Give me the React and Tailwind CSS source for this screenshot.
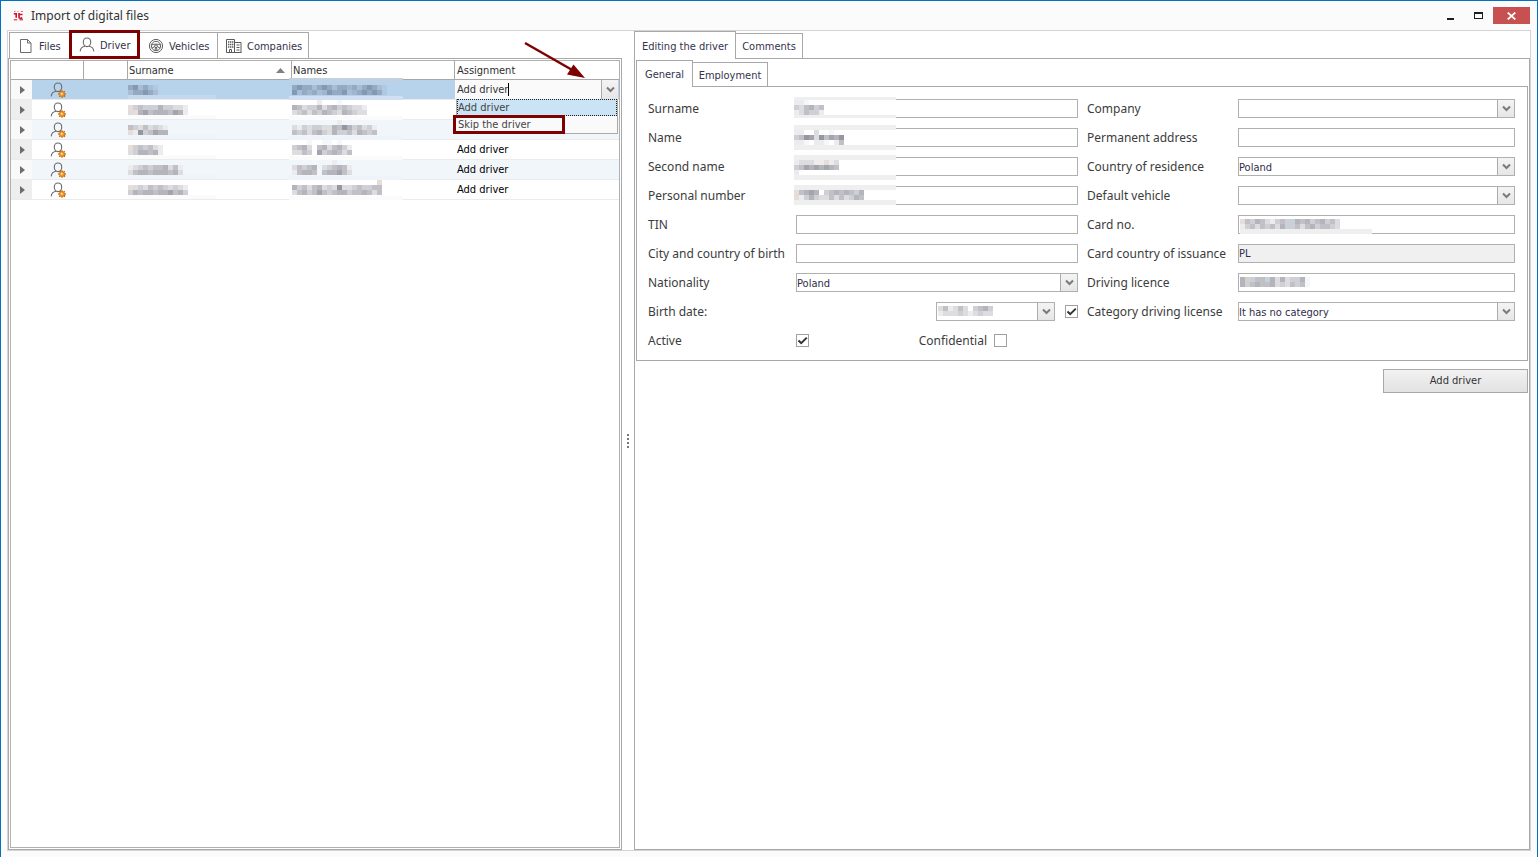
import React, { useState } from 'react';

const SMALL = "font-['DejaVu_Sans_Condensed','DejaVu_Sans',sans-serif] text-[11px]";

// Shades used by the censored values
const SHADES = {
    a: '#ececef', b: '#dddde0', c: '#cfd0d5', d: '#c1c0c6', e: '#b4b4bc', f: '#a4a5ac',
    g: '#e6dcd8', h: '#c8d1d8', i: '#f5f8fb', j: '#d8d0c8', k: '#96969f',
    A: '#a9bdd4', B: '#94a9c2', C: '#8398b3', D: '#9fb6cf', E: '#b0c8e2',
};

// Pixelated block that covers private data, every character is one 5px cell
const Mosaic = ({ rows, className = '', bands = [] }) => {
    const width = Math.max(...rows.map((r) => r.length * 5), ...bands.map((b) => b.x + b.w), 5);
    const height = Math.max(rows.length * 5, ...bands.map((b) => b.y + b.h));
    return (
        <svg
            width={width}
            height={height}
            shapeRendering="crispEdges"
            aria-hidden="true"
            className={`absolute pointer-events-none overflow-visible ${className}`}
        >
            {bands.map((b, i) => (
                <rect key={i} x={b.x} y={b.y} width={b.w} height={b.h} fill={b.fill} />
            ))}
            {rows.map((row, y) =>
                row.split('').map((c, x) =>
                    SHADES[c] ? <rect key={`${x}-${y}`} x={x * 5} y={y * 5} width="5" height="5" fill={SHADES[c]} /> : null
                )
            )}
        </svg>
    );
};

const drivers = [
    { id: 1, surname: ['', 'BCABAE', 'ABBCBA'], names: ['', 'BCBBABCBABBDBABCBAE', 'CABDBADCBBCADBCBCBE'] },
    { id: 2, surname: ['', 'gcdchceccbba', 'bgefdeeedfea'], names: ['.....a...i.', 'edbccebdecdcbba', 'bcdbdcedcbedcbb'] },
    { id: 3, surname: ['', 'dcbdbcba', 'gakcdfee'], names: ['.........a.', 'bacbhcbbedkecdbca', 'dcdbdecbeccdbedcd'] },
    { id: 4, surname: ['', 'gcdcdba', 'bceedea'], names: ['...i..ii.i', 'cdeb.debdeca', 'bbdc.fcdedbd'] },
    { id: 5, surname: ['', 'abcdcddebda', 'bdeedeeedeb'], names: ['....i...a.i', 'bdcde.bcdeda', 'adeed.deefdb'] },
    { id: 6, surname: ['', 'gbcbdcdcbcba', 'cedeedeefdec'], names: ['.................g', 'ecdbdebcbkbbcdccdd', 'bdecdfdcdeecddedbd'] },
];

const DriverIcon = ({ gear = false }) => (
    <svg width="16" height="16" viewBox="0 0 16 16" fill="none" stroke="#6b6b6b" strokeWidth="1.1">
        <path d="M8 1c2.300 0 3.700 1.600 3.700 4S10.300 9.600 8 9.600 4.300 7.400 4.300 5 5.700 1 8 1z" />
        <path d="M6 9.300C3.200 9.800 1.400 11.400 1.200 14.400M10 9.300c2.800.5 4.600 2.100 4.800 5.100" />
        {gear && (
            <g>
                <path d="M12 8.200v7.600M8.200 12h7.600M9.300 9.300l5.400 5.400M14.700 9.300l-5.400 5.400" stroke="#b8690c" strokeWidth="1.300" />
                <circle cx="12" cy="12" r="2.500" fill="#f59b2c" stroke="#d97a12" strokeWidth="0.800" />
                <circle cx="11.700" cy="11.700" r="1" fill="#ffe3b0" stroke="none" />
            </g>
        )}
    </svg>
);

const FileIcon = () => (
    <svg width="14" height="16" viewBox="0 0 14 16" fill="none" stroke="#6b6b6b">
        <path d="M1.500 1.500h7l3.500 3.500v9.500h-10.500zM8.500 1.500v3.500h3.500" />
    </svg>
);

const WheelIcon = () => (
    <svg width="16" height="16" viewBox="0 0 16 16" fill="none" stroke="#5f5f5f">
        <circle cx="8" cy="8" r="6.600" />
        <circle cx="8" cy="8" r="4.700" />
        <circle cx="8" cy="8.200" r="1.400" />
        <path d="M3.500 7c2.800-1.200 6.200-1.200 9 0M4 10l2.500-1.200M12 10l-2.500-1.200M7 12.500l.4-2.700M9 12.500l-.4-2.700" />
    </svg>
);

const CompanyIcon = () => (
    <svg width="16" height="14" viewBox="0 0 16 14" fill="none" stroke="#5a5a5a">
        <path d="M.5 13.500v-13h8v13M.5 13.500h15M8.500 3.500h6.500v10M3.500 13.500v-3h2v3" />
        <path d="M2 3h5.500M2 5.500h5.500M2 8h5.500" strokeWidth="1.700" strokeDasharray="1.400 .6" />
        <path d="M10.500 6h3M10.500 8.500h3M10.500 11h3" />
    </svg>
);

const Chevron = () => (
    <svg width="9" height="7" viewBox="0 0 9 7" fill="none" stroke="#7a7a7a" strokeWidth="2">
        <path d="M1 1.500l3.500 3.500L8 1.500" />
    </svg>
);

const ArrowBox = () => (
    <span className="pointer-events-none absolute inset-y-0 right-0 flex w-[17px] items-center justify-center border-l border-[#ababab] bg-linear-to-b from-[#f4f4f4] to-[#e6e6e6]">
        <Chevron />
    </span>
);

const boxClass = 'h-[19px] w-full rounded-none border border-[#b0b0b0] outline-none text-[#2e2e4a]';

const TextField = ({ id, label, value = '', disabled, mosaic, right }) => (
    <>
        <label htmlFor={id} className={`whitespace-nowrap ${right ? 'pl-[9px]' : ''}`}>{label}</label>
        <div className="relative flex">
            <input
                id={id}
                defaultValue={value}
                disabled={disabled}
                className={`${boxClass} ${SMALL} ${disabled ? 'bg-[#f0f0f0]' : 'bg-white'}`}
            />
            {mosaic}
        </div>
    </>
);

const SelectField = ({ id, label, value = '', right }) => (
    <>
        <label htmlFor={id} className={`whitespace-nowrap ${right ? 'pl-[9px]' : ''}`}>{label}</label>
        <div className="relative flex">
            <select id={id} defaultValue={value} className={`${boxClass} ${SMALL} appearance-none bg-white`}>
                <option value={value}>{value}</option>
            </select>
            <span className="absolute inset-y-px right-px w-[17px]"><ArrowBox /></span>
        </div>
    </>
);

const CheckBox = ({ id, label, checked, onChange }) => (
    <span className="relative flex size-[13px] shrink-0">
        <input
            id={id}
            type="checkbox"
            aria-label={label}
            checked={checked}
            onChange={onChange}
            className="size-[13px] appearance-none border border-[#a0a0a0] bg-white"
        />
        {checked && (
            <svg width="13" height="13" viewBox="0 0 13 13" fill="none" stroke="#333" strokeWidth="2" className="pointer-events-none absolute inset-0">
                <path d="M2.500 6.500L5.200 9.200L10.800 3.600" />
            </svg>
        )}
    </span>
);

const Logo = () => (
    <svg width="11" height="11" viewBox="0 0 11 11" fill="none" stroke="#d3101f">
        <path d="M1 1.500h1.500M4.500 1.500h1M8 1.500h2" strokeOpacity="0.600" />
        <path d="M.8 3.700h2.400v4" strokeWidth="1.600" />
        <path d="M6 3v4.200c0 1.300 2 1.300 3.300.6M6 4.500h3.500" strokeWidth="1.600" />
        <path d="M.8 9.800h3.400M6.500 9.800h3.500" />
    </svg>
);

const headCell = 'border-b border-[#a8a8a8] p-0 font-normal';

const DriverTable = () => {
    const [assignment, setAssignment] = useState('Add driver');

    return (
        <table className={`w-full table-fixed border-separate border-spacing-0 ${SMALL}`}>
            <colgroup>
                <col className="w-[21px]" />
                <col className="w-[52px]" />
                <col className="w-[44px]" />
                <col className="w-[164px]" />
                <col className="w-[163px]" />
                <col />
            </colgroup>
            <thead>
                <tr className="h-[19px] text-left leading-[16px] text-[#2e2e2e]">
                    <th colSpan={2} className={`${headCell} border-r`} />
                    <th className={`${headCell} border-r`} />
                    <th className={`${headCell} border-r pl-px pt-px`}>
                        <div className="flex items-center justify-between pr-[6px]">
                            Surname
                            <svg width="9" height="5" viewBox="0 0 9 5"><path d="M4.500 0L9 5H0z" fill="#808080" /></svg>
                        </div>
                    </th>
                    <th className={`${headCell} border-r pl-px pt-px`}>Names</th>
                    <th className={`${headCell} pl-[2px] pt-px`}>Assignment</th>
                </tr>
            </thead>
            <tbody>
                {drivers.map((d, i) => {
                    const selected = i === 0;
                    const strip = selected ? '#c5d9ee' : i % 2 ? '#fbfbfc' : '#eff4fa';
                    const nameBands = [{ x: -3, y: 16, w: 114, h: 4, fill: selected ? '#d0e0f2' : strip }];
                    if (selected) nameBands.push({ x: -3, y: -2, w: 114, h: 3, fill: '#c3d0dd' });
                    return (
                        <tr
                            key={d.id}
                            className={`h-[20px] leading-[16px] [&>td]:border-b [&>td]:border-[#ebebeb] ${selected ? 'bg-[#b7d2eb]' : i % 2 ? 'bg-white' : 'bg-[#f1f6fb]'}`}
                        >
                            <td className={`p-0 ${i % 2 ? 'bg-[#eeeeee]' : 'bg-[#f9f9f9]'}`}>
                                <svg width="5" height="8" viewBox="0 0 5 8" className="ml-[9px] block"><path d="M0 0l5 4-5 4z" fill="#6e6e6e" /></svg>
                            </td>
                            <td className="p-0"><div className="flex justify-center"><DriverIcon gear /></div></td>
                            <td className="p-0" />
                            <td className="relative p-0">
                                <Mosaic rows={d.surname} className="left-0 top-0" bands={[{ x: 0, y: 15, w: 88, h: 4, fill: strip }]} />
                            </td>
                            <td className="relative p-0">
                                <Mosaic rows={d.names} className="left-0 top-0" bands={nameBands} />
                            </td>
                            {selected ? (
                                <td className="relative p-0 pr-px">
                                    <div className="relative flex h-[19px] items-center bg-[#fafafa] pl-[2px]">
                                        <input
                                            aria-label="Assignment"
                                            value={assignment}
                                            onChange={(e) => setAssignment(e.target.value)}
                                            className="field-sizing-content bg-transparent pt-px text-[#333] outline-none"
                                        />
                                        <span className="h-[13px] w-px bg-black" />
                                        <ArrowBox />
                                    </div>
                                    <ul role="listbox" className="absolute inset-x-px top-[19px] z-10 border-x border-b border-[#ababab] bg-[#fafafa] text-[#444]">
                                        <li
                                            role="option"
                                            aria-selected="true"
                                            onClick={() => setAssignment('Add driver')}
                                            className="h-[17px] border border-dotted border-[#222] bg-[#cae3f5] leading-[16px]"
                                        >
                                            Add driver
                                        </li>
                                        <li
                                            role="option"
                                            aria-selected="false"
                                            onClick={() => setAssignment('Skip the driver')}
                                            className="-my-px -ml-[4px] h-[19px] w-[112px] border-[3px] border-[#7f0000] bg-[#fafafa] pl-[2px] leading-[14px]"
                                        >
                                            Skip the driver
                                        </li>
                                    </ul>
                                </td>
                            ) : (
                                <td className="p-0 pl-[2px] pt-px text-black">Add driver</td>
                            )}
                        </tr>
                    );
                })}
            </tbody>
        </table>
    );
};

const band = (y, h, fill = '#efefef') => ({ x: 0, y, w: 102, h, fill });

const DriverForm = () => {
    const [hasBirthDate, setHasBirthDate] = useState(true);
    const [active, setActive] = useState(true);
    const [confidential, setConfidential] = useState(false);

    return (
        <form className="grid grid-cols-[148px_282fr_160px_277fr] items-center gap-y-[10px] border border-[#a8a8a8] pb-[10px] pl-[11px] pr-[12px] pt-[12px] text-[12px] leading-[19px] text-[#3c3c3c]">
            <TextField id="surname" label="Surname" mosaic={
                <Mosaic className="-left-[2px] -top-[4px]" rows={['', 'aai', 'cbdecd', 'abdcca']} bands={[band(2, 3), band(5, 15, '#fff'), band(20, 3)]} />
            } />
            <SelectField id="company" label="Company" right />
            <TextField id="name" label="Name" mosaic={
                <Mosaic className="-left-[2px] -top-[3px]" rows={['', 'aa..b..i', 'cdkfbkdfek', 'aai.aai.ad']} bands={[band(0, 5), band(5, 15, '#fff'), band(20, 5)]} />
            } />
            <TextField id="address" label="Permanent address" right />
            <TextField id="second" label="Second name" mosaic={
                <Mosaic className="-left-[2px] -top-[2px]" rows={['', 'abbbaagab', 'cdfefefed', 'a']} bands={[band(0, 5), band(5, 15, '#fff'), band(20, 5)]} />
            } />
            <SelectField id="residence" label="Country of residence" value="Poland" right />
            <TextField id="personal" label="Personal number" mosaic={
                <Mosaic className="-left-[2px] -top-px" rows={['', 'gdefe.cdededhe', 'gacecbbdbdbced', '']} bands={[band(0, 5), band(5, 10, '#fff'), band(15, 5)]} />
            } />
            <SelectField id="vehicle" label="Default vehicle" right />
            <TextField id="tin" label="TIN" />
            <TextField id="card" label="Card no." right mosaic={
                <Mosaic className="left-[2px] top-[4px]" rows={['gdcedbacdchedecdecdb', 'acdbdcdbehcdbdecddcb']} bands={[{ x: 0, y: 10, w: 132, h: 5, fill: '#efefef' }]} />
            } />
            <TextField id="birthplace" label="City and country of birth" />
            <TextField id="issuance" label="Card country of issuance" value="PL" disabled right />
            <SelectField id="nationality" label="Nationality" value="Poland" />
            <TextField id="licence" label="Driving licence" right mosaic={
                <Mosaic className="left-[2px] top-[4px]" rows={['ejhddhebebccei', 'ecdeddebcbdcdi']} />
            } />

            <label htmlFor="birth">Birth date:</label>
            <div className="flex items-center justify-end gap-[10px]">
                <div className="relative flex w-[119px]">
                    <input id="birth" className={`${boxClass} ${SMALL} bg-white`} />
                    <Mosaic className="left-[2px] top-[4px]" rows={['bdabdb.cdec', 'abbbcbabcbb']} />
                    <span className="absolute inset-y-px right-px w-[17px]"><ArrowBox /></span>
                </div>
                <CheckBox id="has-birth" label="Birth date known" checked={hasBirthDate} onChange={() => setHasBirthDate(!hasBirthDate)} />
            </div>
            <SelectField id="category" label="Category driving license" value="It has no category" right />

            <label htmlFor="active">Active</label>
            <div className="flex items-center justify-between pr-[71px]">
                <CheckBox id="active" checked={active} onChange={() => setActive(!active)} />
                <div className="flex items-center gap-[7px]">
                    <label htmlFor="confidential">Confidential</label>
                    <CheckBox id="confidential" checked={confidential} onChange={() => setConfidential(!confidential)} />
                </div>
            </div>
        </form>
    );
};

const tab = 'flex items-center whitespace-nowrap border border-[#a8a8a8] bg-white';

const Tab = ({ icon, children, className, selected = false }) => (
    <button role="tab" aria-selected={selected} className={className}>
        {icon}
        <span className="pt-[3px]">{children}</span>
    </button>
);

const App = () => (
    <div className="flex h-screen flex-col border-x border-t border-[#0072c6] bg-[#fbfbfb] px-[6px] pb-[6px] font-['Noto_Sans',sans-serif]">
        <header className="flex h-[29px] shrink-0 items-center pl-[6px] pr-px">
            <Logo />
            <h1 className="ml-[7px] text-[12px] text-[#333]">Import of digital files</h1>
            <div className="ml-auto flex items-center">
                <button aria-label="Minimize" className="flex h-[17px] w-[26px] items-center justify-center">
                    <svg width="8" height="9" viewBox="0 0 8 9"><path d="M0 7h7v2H0z" fill="#1e1e1e" /></svg>
                </button>
                <button aria-label="Maximize" className="flex h-[17px] w-[28px] items-center justify-center">
                    <svg width="9" height="7" viewBox="0 0 9 7"><path d="M0 0h9v7H0zM1 2v4h7V2z" fill="#1e1e1e" fillRule="evenodd" /></svg>
                </button>
                <button aria-label="Close" className="ml-px flex h-[17px] w-[37px] items-center justify-center bg-[#c75050]">
                    <svg width="9" height="8" viewBox="0 0 9 8" stroke="#fff" strokeWidth="1.700"><path d="M.7.5l7.600 7M8.300.5L.7 7.500" /></svg>
                </button>
            </div>
        </header>

        <main className="flex min-h-0 grow border border-[#d4d4d4] bg-white">
            <section className="relative flex min-w-0 flex-[614_1_0%] flex-col">
                <div role="tablist" className={`flex h-[27px] shrink-0 items-end pl-px text-[#33334d] ${SMALL}`}>
                    <Tab icon={<FileIcon />} className={`${tab} h-[26px] w-[60px] gap-[6px] border-b-0 border-r-0 pl-[9px]`}>Files</Tab>
                    <Tab
                        selected
                        icon={<DriverIcon />}
                        className="relative z-10 -mb-px flex h-[29px] w-[71px] items-center gap-[5px] border-[3px] border-[#7f0000] bg-white pl-[7px]"
                    >
                        Driver
                    </Tab>
                    <Tab icon={<WheelIcon />} className={`${tab} h-[26px] w-[77px] gap-[5px] border-b-0 border-l-0 border-r-0 pl-[8px]`}>Vehicles</Tab>
                    <Tab icon={<CompanyIcon />} className={`${tab} h-[26px] w-[92px] gap-[5px] border-b-0 pl-[8px]`}>Companies</Tab>
                </div>
                <div className="flex grow flex-col border border-[#a8a8a8] p-px">
                    <div className="grow border border-[#b0b0b0]">
                        <DriverTable />
                    </div>
                </div>
                <svg width="62" height="40" viewBox="0 0 62 40" className="pointer-events-none absolute right-[36px] top-[9px] z-20">
                    <path d="M1 3L50 31" stroke="#7f0000" strokeWidth="2.500" />
                    <path d="M61 38L43 34.500L49.500 24.500z" fill="#7f0000" />
                </svg>
            </section>

            <div className="flex w-[12px] shrink-0 flex-col items-center justify-center gap-[2px]">
                {[0, 1, 2, 3].map((n) => <span key={n} className="size-[2px] bg-[#777]" />)}
            </div>

            <section className="flex min-w-0 flex-[896_1_0%] flex-col">
                <div role="tablist" className={`flex h-[27px] shrink-0 items-end text-[#33334d] ${SMALL}`}>
                    <Tab selected className={`${tab} relative z-10 -mb-px h-[28px] w-[102px] justify-center border-b-0`}>Editing the driver</Tab>
                    <Tab className={`${tab} h-[25px] w-[67px] justify-center border-b-0 border-l-0`}>Comments</Tab>
                </div>
                <div className="grow border border-[#a8a8a8] p-px">
                    <div role="tablist" className={`flex h-[26px] items-end text-[#33334d] ${SMALL}`}>
                        <Tab selected className={`${tab} relative z-10 -mb-px h-[27px] w-[57px] justify-center border-b-0`}>General</Tab>
                        <Tab className={`${tab} h-[24px] w-[75px] justify-center border-b-0 border-l-0`}>Employment</Tab>
                    </div>
                    <DriverForm />
                    <div className="mt-[8px] flex justify-end">
                        <button className={`h-[24px] w-[145px] border border-[#a8a8a8] bg-linear-to-b from-[#f2f2f2] to-[#e2e2e2] pt-px text-[#333] ${SMALL}`}>Add driver</button>
                    </div>
                </div>
            </section>
        </main>
    </div>
);

export default App;
